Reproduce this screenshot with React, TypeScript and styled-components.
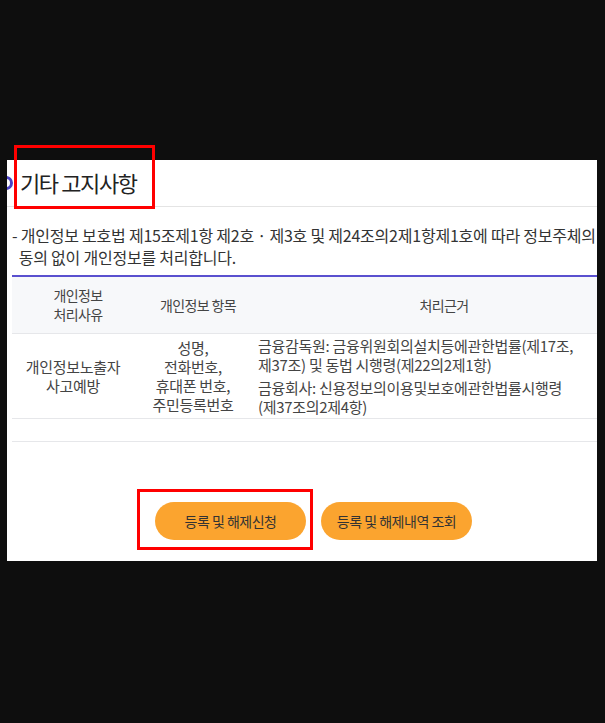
import React from "react";
import styled, { createGlobalStyle } from "styled-components";

const GlobalStyle = createGlobalStyle`
  html, body {
    margin: 0;
    padding: 0;
    background: #0e0e0e;
    font-family: "Noto Sans CJK KR", "Noto Sans", sans-serif;
  }
`;

const Page = styled.div`
  position: relative;
  width: 605px;
  height: 723px;
  padding: 160px 0 0 7px;
  box-sizing: border-box;
`;

const Panel = styled.div`
  width: 590px;
  height: 401px;
  background: #ffffff;
  overflow: hidden;
  display: flex;
  flex-direction: column;
`;

const TitleBar = styled.div`
  height: 47px;
  flex: none;
  border-bottom: 1px solid #e4e4e4;
  display: flex;
  align-items: center;
  gap: 7px;
  box-sizing: border-box;
`;

const Ring = styled.span`
  width: 14px;
  height: 14px;
  margin-left: -8px;
  border: 3px solid #4a42c4;
  border-radius: 50%;
  box-sizing: border-box;
  flex: none;
`;

const Title = styled.h2`
  margin: 0 0 2px;
  font-size: 22px;
  font-weight: 400;
  letter-spacing: -1.4px;
  color: #222;
`;

const Content = styled.div`
  width: 640px;
  padding: 17px 0 0 5px;
`;

const Notice = styled.p`
  margin: 0;
  font-size: 16px;
  line-height: 22px;
  letter-spacing: -0.22px;
  color: #333;
  white-space: nowrap;
`;

const Table = styled.table`
  margin-top: 7px;
  width: 624px;
  border-collapse: collapse;
  border-top: 2px solid #5a50cf;
  table-layout: fixed;
`;

const HeadCell = styled.th<{ $w: number }>`
  width: ${(p) => p.$w}px;
  height: 56px;
  padding: 0;
  background: #f7f8fa;
  border-bottom: 1px solid #e6e7ea;
  font-size: 14px;
  line-height: 19px;
  font-weight: 400;
  letter-spacing: -0.6px;
  color: #444;
  text-align: center;
  vertical-align: middle;
`;

const Cell = styled.td<{ $left?: boolean }>`
  height: 84px;
  padding: ${(p) => (p.$left ? "0 4px 0 6px" : "0 10px 0 0")};
  border-bottom: 1px solid #e6e7ea;
  font-size: 15px;
  line-height: 19px;
  letter-spacing: -0.3px;
  color: #444;
  text-align: ${(p) => (p.$left ? "left" : "center")};
  vertical-align: middle;
  white-space: nowrap;
`;

const EmptyCell = styled.td`
  height: 22px;
  padding: 0;
  border-bottom: 1px solid #e6e7ea;
`;

const Basis = styled.p`
  margin: 0;
  & + & {
    margin-top: 4px;
  }
`;

const ButtonRow = styled.div`
  display: flex;
  gap: 15px;
  padding: 60px 0 0 148px;
`;

const PillButton = styled.button`
  width: 151px;
  height: 38px;
  border: none;
  border-radius: 19px;
  background: #fba42f;
  font-family: "Noto Sans CJK KR", "Noto Sans", sans-serif;
  font-size: 14px;
  letter-spacing: -0.5px;
  color: #333;
  cursor: pointer;
  padding: 0;
`;

const Marker = styled.div<{ $x: number; $y: number; $w: number; $h: number }>`
  position: absolute;
  left: ${(p) => p.$x}px;
  top: ${(p) => p.$y}px;
  width: ${(p) => p.$w}px;
  height: ${(p) => p.$h}px;
  border: 3px solid #ff0000;
  box-sizing: border-box;
  pointer-events: none;
`;

export default function App() {
  return (
    <>
      <GlobalStyle />
      <Page>
        <Panel>
          <TitleBar>
            <Ring />
            <Title>기타 고지사항</Title>
          </TitleBar>
          <Content>
            <Notice>
              - 개인정보 보호법 제15조제1항 제2호 · 제3호 및 제24조의2제1항제1호에 따라 정보주체의
              <br />
              &nbsp;&nbsp;동의 없이 개인정보를 처리합니다.
            </Notice>
            <Table>
              <thead>
                <tr>
                  <HeadCell $w={132}>
                    개인정보
                    <br />
                    처리사유
                  </HeadCell>
                  <HeadCell $w={108}>개인정보 항목</HeadCell>
                  <HeadCell $w={384}>처리근거</HeadCell>
                </tr>
              </thead>
              <tbody>
                <tr>
                  <Cell>
                    개인정보노출자
                    <br />
                    사고예방
                  </Cell>
                  <Cell>
                    성명,
                    <br />
                    전화번호,
                    <br />
                    휴대폰 번호,
                    <br />
                    주민등록번호
                  </Cell>
                  <Cell $left>
                    <Basis>
                      금융감독원: 금융위원회의설치등에관한법률(제17조,
                      <br />
                      제37조) 및 동법 시행령(제22의2제1항)
                    </Basis>
                    <Basis>
                      금융회사: 신용정보의이용및보호에관한법률시행령
                      <br />
                      (제37조의2제4항)
                    </Basis>
                  </Cell>
                </tr>
                <tr>
                  <EmptyCell />
                  <EmptyCell />
                  <EmptyCell />
                </tr>
              </tbody>
            </Table>
          </Content>
          <ButtonRow>
            <PillButton type="button">등록 및 해제신청</PillButton>
            <PillButton type="button">등록 및 해제내역 조회</PillButton>
          </ButtonRow>
        </Panel>
        <Marker $x={14} $y={145} $w={141} $h={64} />
        <Marker $x={137} $y={489} $w={176} $h={61} />
      </Page>
    </>
  );
}
